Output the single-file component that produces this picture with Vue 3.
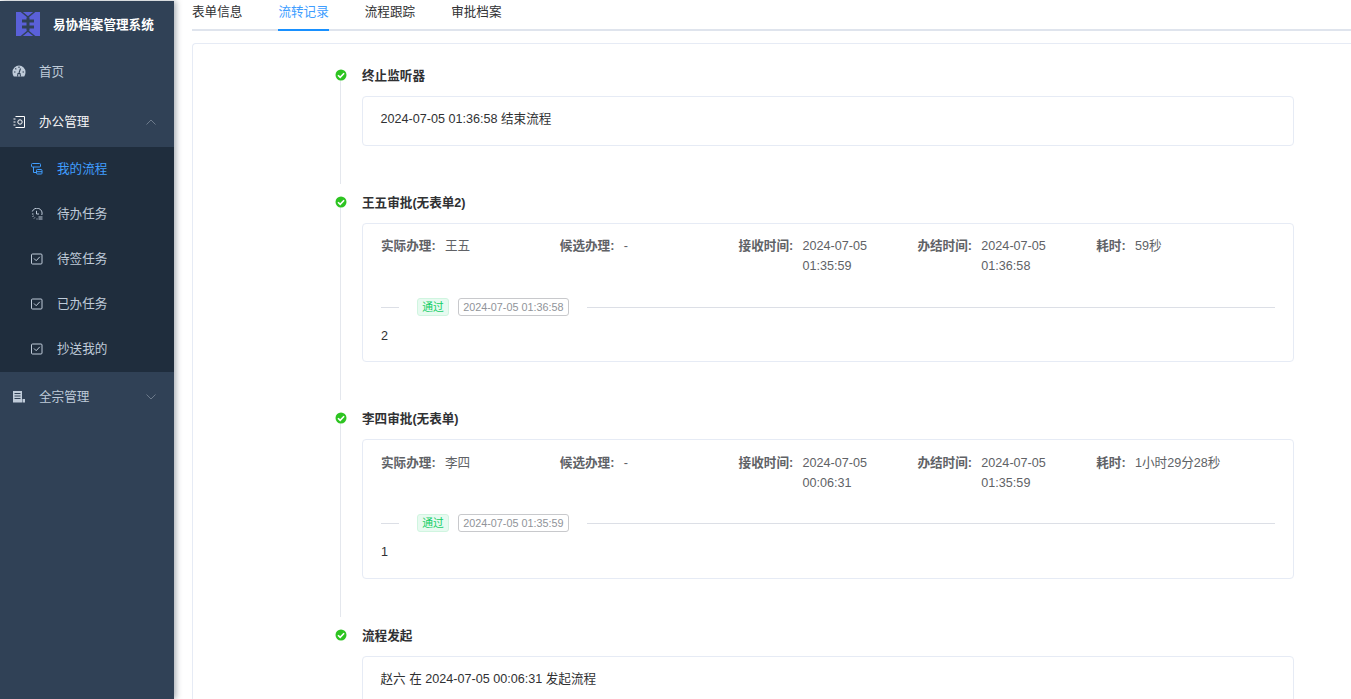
<template>
  <div class="app">
    <aside class="sidebar">
      <div class="logo">
        <svg class="logo-mark" viewBox="0 0 24 24">
          <rect width="24" height="24" fill="#5a60d8" />
          <path fill="none" stroke="#304156" stroke-width="1.400" d="M4.500 -1L12 5L19.500 -1M4.500 25L12 19L19.500 25" />
          <path fill="#304156" d="M6 7.500H10.500V10.500H6ZM6 13.500H10.500V16.500H6ZM18 7.500H13.500V10.500H18ZM18 13.500H13.500V16.500H18ZM10.500 5.500L12 5L13.500 5.500V18.500L12 19L10.500 18.500Z" />
        </svg>
        <span class="logo-title">易协档案管理系统</span>
      </div>
      <div class="menu-item">
        <svg class="menu-icon" viewBox="0 0 14 14">
          <path fill="#bfcbd9" d="M7 1.500A6.500 6.500 0 0 0 .5 8C.5 10 1 11 1.800 12.500H12.200C13 11 13.500 10 13.500 8A6.500 6.500 0 0 0 7 1.500Z" />
          <path fill="none" stroke="#304156" stroke-width="1.100" d="M7 9L8.500 4.500M7 2.500V4M3.300 4.300L4.300 5.300M2 8H3.500M12 8H10.500M5.500 12.500L6 9.500H8L8.500 12.500" />
        </svg>
        <span class="label">首页</span>
      </div>
      <div class="menu-item open">
        <svg class="menu-icon" viewBox="0 0 14 14">
          <path fill="none" stroke="#fff" d="M3.500 1.500H12.500V12.500H3.500M1.500 4H3.500M1.500 7H3.500M1.500 10H3.500" />
          <circle cx="8" cy="7" r="2.200" fill="none" stroke="#fff" />
        </svg>
        <span class="label">办公管理</span>
        <svg class="arrow" viewBox="0 0 10 6"><path d="M.5 5.500L5 1L9.500 5.500" /></svg>
      </div>
      <div class="submenu">
        <div v-for="item in subItems" :key="item.name" class="sub-item" :class="{ active: item.active }">
          <svg class="sub-icon" viewBox="0 0 12 12">
            <g v-if="item.icon === 'flow'" fill="none" stroke="currentColor">
              <rect x=".5" y=".5" width="9" height="3.500" rx="1" />
              <path d="M2.500 4V9.500H5.500" />
              <rect x="5.500" y="6.500" width="5.500" height="4.500" rx=".8" />
              <path d="M5.500 8.700H11" />
            </g>
            <g v-else-if="item.icon === 'clock'" fill="none" stroke="currentColor">
              <path d="M1.300 3.500A5 5 0 1 1 10.800 7M1 6H2.500M1.500 8.500L2.700 8M3 10.500L3.800 9.500M5.500 11H6.500M5.500 2.800V6H8" />
              <path d="M7.500 9H11.500M7.500 11H11.500" stroke-width="1.200" />
            </g>
            <g v-else fill="none" stroke="currentColor">
              <rect x=".5" y="1" width="10.500" height="10" rx="1" />
              <path d="M3 5.500L5.200 7.700L8.800 3.800" />
            </g>
          </svg>
          <span class="label">{{ item.name }}</span>
        </div>
      </div>
      <div class="menu-item">
        <svg class="menu-icon" viewBox="0 0 14 14">
          <path fill="#bfcbd9" d="M1 1H10V12.500H1Z" />
          <path fill="none" stroke="#304156" d="M2.500 3.500H8.500M2.500 6H8.500M2.500 8.500H8.500" />
          <path fill="#bfcbd9" d="M10.500 9H13V12.500H10.500Z" />
        </svg>
        <span class="label">全宗管理</span>
        <svg class="arrow" viewBox="0 0 10 6"><path d="M.5 .5L5 5L9.500 .5" /></svg>
      </div>
    </aside>

    <main class="main">
      <div class="tabs">
        <div v-for="tab in tabs" :key="tab" class="tab" :class="{ active: tab === '流转记录' }">{{ tab }}</div>
      </div>
      <section class="panel">
        <ul class="timeline">
          <li v-for="node in nodes" :key="node.title" class="node">
            <svg class="dot" viewBox="0 0 12 12">
              <circle cx="6" cy="6" r="5.500" fill="#2dc421" />
              <path d="M3 6.200L5.200 8.400L9.100 4.200" fill="none" stroke="#fff" stroke-width="1.600" />
            </svg>
            <h4 class="node-title">{{ node.title }}</h4>
            <div class="card" :class="{ detail: node.fields }">
              <template v-if="node.fields">
                <div class="fields">
                  <div v-for="field in node.fields" :key="field.label" class="field">
                    <label>{{ field.label }}</label>
                    <span>{{ field.value }}</span>
                  </div>
                </div>
                <div class="divider">
                  <div class="divider-text">
                    <span class="tag pass">通过</span>
                    <span class="tag time">{{ node.time }}</span>
                  </div>
                </div>
                <div class="comment">{{ node.comment }}</div>
              </template>
              <template v-else>{{ node.text }}</template>
            </div>
          </li>
        </ul>
      </section>
    </main>
  </div>
</template>

<script setup>
const subItems = [
  { name: '我的流程', icon: 'flow', active: true },
  { name: '待办任务', icon: 'clock' },
  { name: '待签任务', icon: 'check' },
  { name: '已办任务', icon: 'check' },
  { name: '抄送我的', icon: 'check' },
]

const tabs = ['表单信息', '流转记录', '流程跟踪', '审批档案']

const nodes = [
  { title: '终止监听器', text: '2024-07-05 01:36:58 结束流程' },
  {
    title: '王五审批(无表单2)',
    fields: [
      { label: '实际办理:', value: '王五' },
      { label: '候选办理:', value: '-' },
      { label: '接收时间:', value: '2024-07-05 01:35:59' },
      { label: '办结时间:', value: '2024-07-05 01:36:58' },
      { label: '耗时:', value: '59秒' },
    ],
    time: '2024-07-05 01:36:58',
    comment: '2',
  },
  {
    title: '李四审批(无表单)',
    fields: [
      { label: '实际办理:', value: '李四' },
      { label: '候选办理:', value: '-' },
      { label: '接收时间:', value: '2024-07-05 00:06:31' },
      { label: '办结时间:', value: '2024-07-05 01:35:59' },
      { label: '耗时:', value: '1小时29分28秒' },
    ],
    time: '2024-07-05 01:35:59',
    comment: '1',
  },
  { title: '流程发起', text: '赵六 在 2024-07-05 00:06:31 发起流程' },
]
</script>

<style>
html,
body {
  margin: 0;
  height: 100%;
  overflow: hidden;
  background: #fff;
}
</style>

<style scoped>
.app {
  display: flex;
  height: 699px;
  overflow: hidden;
  font-family: "Liberation Sans", "Noto Sans CJK SC", sans-serif;
  font-size: 12.600px;
  color: #303133;
}

.sidebar {
  flex: 0 0 174px;
  margin-top: 1px;
  background: #304156;
  color: #bfcbd9;
  box-shadow: 2px 0 6px rgba(0, 21, 41, 0.35);
  z-index: 1;
}

.logo {
  display: flex;
  align-items: center;
  height: 45px;
  padding-left: 16px;
}

.logo-mark {
  width: 24px;
  height: 24px;
}

.logo-title {
  margin-left: 13px;
  color: #fff;
  font-size: 12.600px;
  font-weight: 700;
}

.menu-item {
  display: flex;
  align-items: center;
  height: 50.400px;
  padding-left: 12px;
}

.menu-item.open {
  color: #f4f4f5;
}

.label {
  margin-top: -2px;
}

.menu-icon {
  width: 14px;
  height: 14px;
  margin-right: 13px;
}

.arrow {
  width: 10px;
  height: 6px;
  margin-left: auto;
  margin-right: 18px;
  fill: none;
  stroke: #6c7a8b;
}

.submenu {
  background: #1f2d3d;
}

.sub-item {
  display: flex;
  align-items: center;
  height: 45px;
  padding-left: 31px;
}

.sub-item .label {
  margin-top: -4px;
}

.sub-item.active {
  color: #409eff;
}

.sub-icon {
  width: 12px;
  height: 12px;
  margin-right: 14px;
}

.main {
  flex: 1;
  min-width: 0;
  padding: 1px 0 0 18px;
}

.tabs {
  display: flex;
  gap: 36px;
  height: 28px;
  border-bottom: 2px solid #dfe4ed;
}

.tab {
  height: 28px;
  line-height: 23px;
}

.tab.active {
  color: #409eff;
  border-bottom: 2px solid #1890ff;
}

.panel {
  margin-top: 12px;
  border: 1px solid #e6ebf5;
  border-right: 0;
  border-radius: 4px 0 0 4px;
  height: 800px;
}

.timeline {
  list-style: none;
  margin: 0;
  padding: 22px 57px 0 169px;
}

.node {
  position: relative;
  padding-bottom: 46.900px;
}

.node::before {
  content: "";
  position: absolute;
  left: -22px;
  top: 9px;
  bottom: 9px;
  width: 1px;
  background: #e4e7ed;
}

.node:last-child::before {
  display: none;
}

.dot {
  position: absolute;
  left: -27px;
  top: 3px;
  width: 12px;
  height: 12px;
}

.node-title {
  margin: 0 0 10px;
  font-size: 12.600px;
  line-height: 20px;
  font-weight: 700;
  color: #303133;
}

.card {
  border: 1px solid #e6ebf5;
  border-radius: 4px;
  padding: 12.400px 17.500px 15.600px;
  line-height: 20px;
  color: #303133;
}

.card.detail {
  padding: 12.400px 18px 15.500px;
}

.fields {
  display: grid;
  grid-template-columns: repeat(5, 1fr);
}

.field {
  display: flex;
  gap: 9.400px;
  color: #606266;
  line-height: 20px;
}

.field label {
  flex: none;
  font-weight: 700;
}

.divider {
  position: relative;
  height: 1px;
  margin: 30.600px 0 18px;
  background: #dcdfe6;
}

.divider-text {
  position: absolute;
  left: 18px;
  top: -9px;
  display: flex;
  gap: 8.600px;
  padding: 0 18px;
  background: #fff;
}

.tag {
  display: block;
  box-sizing: border-box;
  height: 18px;
  padding: 0 4.600px;
  border: 1px solid;
  border-radius: 3px;
  font-size: 10.800px;
  line-height: 16px;
}

.tag.pass {
  color: #13ce66;
  background: #e7faf0;
  border-color: #d0f5e0;
  padding: 0 4.200px;
}

.tag.time {
  color: #909399;
  background: #fff;
  border-color: #c8c9cc;
}

.comment {
  line-height: 20px;
}
</style>
